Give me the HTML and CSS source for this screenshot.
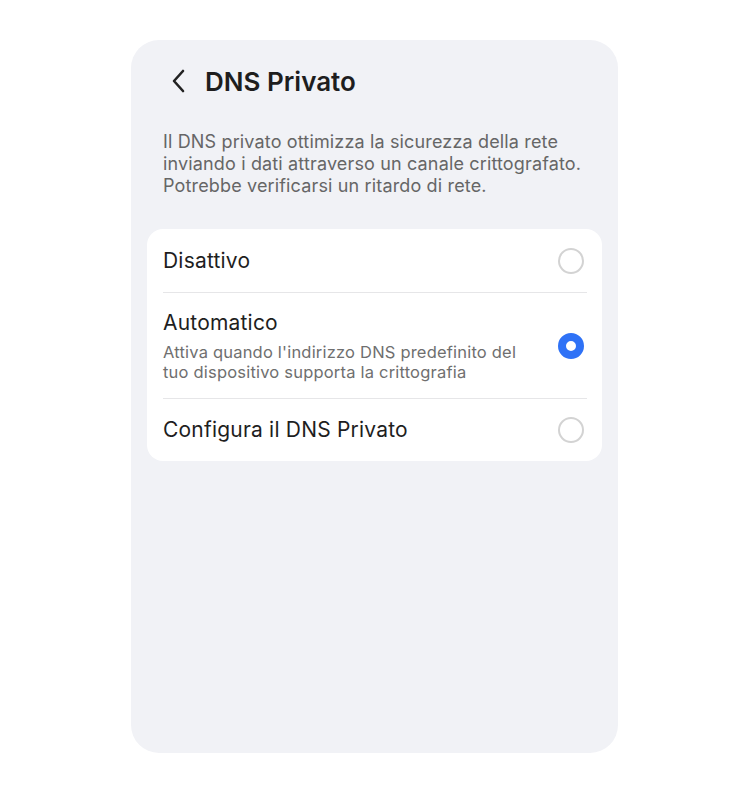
FILE: index.html
```html
<!DOCTYPE html>
<html lang="it">
<head>
<meta charset="utf-8">
<link rel="stylesheet" href="styles.css">
</head>
<body>
<div class="panel">
  <header class="header">
    <svg class="back" width="16" height="26" viewBox="0 0 16 26"><path d="M12 3 L3 13 L12 23" fill="none" stroke="#222" stroke-width="2.6" stroke-linecap="round" stroke-linejoin="round"/></svg>
    <h1 class="title">DNS Privato</h1>
  </header>
  <p class="desc">Il DNS privato ottimizza la sicurezza della rete<br>inviando i dati attraverso un canale crittografato.<br>Potrebbe verificarsi un ritardo di rete.</p>
  <div class="card">
    <div class="row">
      <div class="text"><div class="label">Disattivo</div></div>
      <span class="radio"></span>
    </div>
    <div class="row row-tall">
      <div class="text">
        <div class="label">Automatico</div>
        <div class="sub">Attiva quando l'indirizzo DNS predefinito del<br>tuo dispositivo supporta la crittografia</div>
      </div>
      <span class="radio on"></span>
    </div>
    <div class="row">
      <div class="text"><div class="label">Configura il DNS Privato</div></div>
      <span class="radio"></span>
    </div>
  </div>
</div>
</body>
</html>
```
FILE: styles.css
```css
html, body { margin: 0; padding: 0; background: #fff; }
body {
  font-family: Inter, "Noto Sans", sans-serif;
  color: #1c1c1e;
  padding-top: 40px;
}
.panel {
  margin-left: 131px;
  width: 487px;
  height: 713px;
  background: #f1f2f6;
  border-radius: 28px;
  box-sizing: border-box;
}
.header {
  height: 82px;
  display: flex;
  align-items: center;
  padding-left: 40px;
}
.back { margin-right: 18px; }
.title {
  margin: 0;
  font-size: 26px;
  font-weight: 600;
  color: #1e1e1e;
}
.desc {
  margin: 9px 0 0;
  padding: 0 32px;
  font-size: 18px;
  letter-spacing: 0.15px;
  line-height: 22px;
  color: #666;
  white-space: nowrap;
}
.card {
  margin: 32px 16px 0;
  background: #fff;
  border-radius: 16px;
  padding: 0 15px 0 16px;
}
.row {
  display: flex;
  align-items: center;
  min-height: 63px;
  box-sizing: border-box;
  border-top: 1px solid #e6e6e8;
}
.row:first-child { border-top: none; padding-top: 1px; }
.row-tall { padding: 17px 0 16px; min-height: 106px; }
.text { flex: 1; }
.label { font-size: 21px; letter-spacing: 0.2px; line-height: 26px; color: #1e1e1e; }
.sub { margin-top: 6px; font-size: 16.5px; letter-spacing: 0.2px; line-height: 20px; color: #6f6f6f; white-space: nowrap; }
.radio {
  width: 26px; height: 26px;
  box-sizing: border-box;
  border: 2px solid #d3d3d3;
  border-radius: 50%;
  margin-right: 3px;
  flex: none;
}
.radio.on { border: 8px solid #2f72f6; }
```
